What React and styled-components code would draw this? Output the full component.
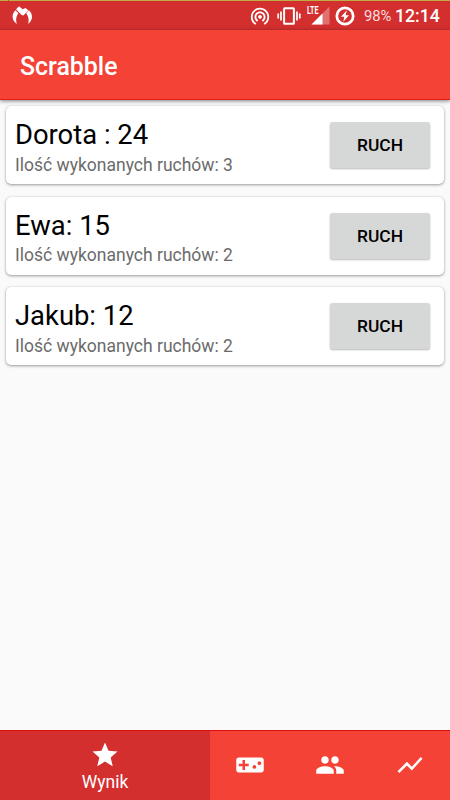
import React from "react";
import styled, { createGlobalStyle } from "styled-components";
import {
  MdStar,
  MdVideogameAsset,
  MdPeople,
  MdShowChart,
  MdWifiTethering,
} from "react-icons/md";

const GlobalStyle = createGlobalStyle`
  * {
    box-sizing: border-box;
  }
  body {
    margin: 0;
    background: #fafafa;
    font-family: Roboto, "Liberation Sans", sans-serif;
  }
`;

const Screen = styled.div`
  display: flex;
  flex-direction: column;
  width: 450px;
  height: 800px;
  overflow: hidden;
  background: #fafafa;
`;

const Strip = styled.div`
  height: 1px;
  flex: none;
  background: linear-gradient(90deg, #bcae45 8px, #e0402c 8px, #e0402c 9px, #bcae45 9px);
`;

const StatusBar = styled.div`
  display: flex;
  flex: none;
  align-items: center;
  height: 29px;
  padding: 0 10px 0 12px;
  color: #fff;
  background: #d32f2f;
`;

const StatusIcons = styled.div`
  display: flex;
  align-items: center;
  margin-left: auto;

  svg {
    display: block;
    flex: none;
  }
`;

const IconGroup = styled.div`
  display: flex;
  align-items: center;
  gap: 5.6px;
`;

const Battery = styled.span`
  width: 28px;
  margin-left: 8.8px;
  padding-top: 2px;
  font-size: 14.8px;
  line-height: 27px;
  letter-spacing: -0.1px;
  white-space: nowrap;
  color: #fbdede;
`;

const Clock = styled.span`
  width: 45px;
  margin-left: 3px;
  padding-top: 2px;
  font-size: 17.7px;
  font-weight: 500;
  line-height: 27px;
  white-space: nowrap;
`;

const AppBar = styled.header`
  display: flex;
  flex: none;
  align-items: center;
  height: 70px;
  padding: 4px 20px 0;
  background: #f44336;
  border-bottom: 1px solid #e51c13;
  box-shadow: 0 1px 4px rgba(0, 0, 0, 0.5);
`;

const Title = styled.h1`
  margin: 0;
  font-size: 24.9px;
  font-weight: 500;
  line-height: 30px;
  color: #fff;
`;

const List = styled.main`
  display: flex;
  flex: 1;
  flex-direction: column;
  gap: 12.5px;
  padding: 6px 6px 0;
`;

const Card = styled.section`
  display: flex;
  align-items: center;
  justify-content: space-between;
  height: 78px;
  padding: 0 14px 0 9px;
  background: #fff;
  border-radius: 5px;
  box-shadow: 0 1px 3px rgba(0, 0, 0, 0.38), 0 0 1px rgba(0, 0, 0, 0.16);
`;

const PlayerInfo = styled.div`
  padding-top: 4.5px;
`;

const Name = styled.div`
  font-size: 27.4px;
  line-height: 33px;
  color: #000;
`;

const Moves = styled.div`
  font-size: 17.5px;
  line-height: 21px;
  margin-top: 2.5px;
  color: #6b6b6b;
`;

const MoveButton = styled.button`
  width: 100px;
  height: 46px;
  padding: 0;
  border: 0;
  border-radius: 2.5px;
  font-family: inherit;
  font-size: 17.4px;
  font-weight: 500;
  color: #000;
  background: #d6d7d7;
  box-shadow: 0 1px 2px rgba(0, 0, 0, 0.28);
`;

const BottomNav = styled.nav`
  display: flex;
  flex: none;
  height: 70px;
  color: #fff;
  background: #f44336;
  border-top: 1px solid #dc100c;
`;

const Tab = styled.div`
  display: flex;
  flex-direction: column;
  align-items: center;
  justify-content: ${(props) => (props.$active ? "flex-start" : "center")};
  width: ${(props) => (props.$active ? "210px" : "80px")};
  padding: ${(props) => (props.$active ? "9px 0 0" : "0 0 1px")};
  background: ${(props) => (props.$active ? "#d32f2f" : "transparent")};

  svg {
    display: block;
  }
`;

const TabLabel = styled.span`
  margin-top: 1px;
  font-size: 17.5px;
  line-height: 22px;
`;

const players = [
  { name: "Dorota : 24", moves: 3 },
  { name: "Ewa: 15", moves: 2 },
  { name: "Jakub: 12", moves: 2 },
];

const ClawIcon = () => (
  <svg width="21" height="19" viewBox="0 0 21 19" fill="#fff">
    <path d="M4 3.2 7 .2 10.6 3.2 13.6 2 16.4 4.4 11.4 9.6 9.6 9z" />
    <path d="M3.5 4.2C-.6 8-.6 13.8 4.8 18 3.6 13.6 4 10.6 6.4 7.2z" />
    <path d="M16.9 4.2C21 8 21.2 13.8 16.2 18c.9-4.4.4-7.4-2-10.8z" />
  </svg>
);

const VibrateIcon = () => (
  <svg width="24" height="18" viewBox="0 0 24 18" fill="none" stroke="#fff">
    <rect x="7.1" y="1.2" width="9.8" height="15.6" rx=".6" strokeWidth="2" />
    <path d="M4 4.5v9M20 4.5v9M1.2 6.5v5M22.8 6.5v5" strokeWidth="1.7" />
  </svg>
);

const SignalIcon = () => (
  <svg width="23" height="23" viewBox="0 -2 23 23">
    <path d="M22.5.5V18.5H4.5z" fill="#fff" fillOpacity=".32" />
    <path d="M15.5 7.5v11h-11z" fill="#fff" />
    <text
      x="0"
      y="8"
      fill="#fff"
      fontFamily="Roboto, sans-serif"
      fontSize="10"
      fontWeight="700"
      textLength="11.5"
      lengthAdjust="spacingAndGlyphs"
    >
      LTE
    </text>
  </svg>
);

const ChargeIcon = () => (
  <svg width="20" height="20" viewBox="0 0 20 20">
    <circle cx="10" cy="10" r="8.2" fill="none" stroke="#fff" strokeWidth="2.7" />
    <path d="M11.8 4.2 6 10.8h3.3l-1 5 5.7-6.6h-3.4z" fill="#fff" />
  </svg>
);

const PlayerCard = ({ name, moves }) => (
  <Card>
    <PlayerInfo>
      <Name>{name}</Name>
      <Moves>Ilość wykonanych ruchów: {moves}</Moves>
    </PlayerInfo>
    <MoveButton>RUCH</MoveButton>
  </Card>
);

const App = () => {
  return (
    <Screen>
      <GlobalStyle />
      <Strip />
      <StatusBar>
        <ClawIcon />
        <StatusIcons>
          <IconGroup>
            <MdWifiTethering size={22} />
            <VibrateIcon />
            <SignalIcon />
            <ChargeIcon />
          </IconGroup>
          <Battery>98%</Battery>
          <Clock>12:14</Clock>
        </StatusIcons>
      </StatusBar>
      <AppBar>
        <Title>Scrabble</Title>
      </AppBar>
      <List>
        {players.map((player) => (
          <PlayerCard key={player.name} {...player} />
        ))}
      </List>
      <BottomNav>
        <Tab $active>
          <MdStar size={30} />
          <TabLabel>Wynik</TabLabel>
        </Tab>
        <Tab>
          <MdVideogameAsset size={30} />
        </Tab>
        <Tab>
          <MdPeople size={30} />
        </Tab>
        <Tab>
          <MdShowChart size={30} />
        </Tab>
      </BottomNav>
    </Screen>
  );
};

export default App;
